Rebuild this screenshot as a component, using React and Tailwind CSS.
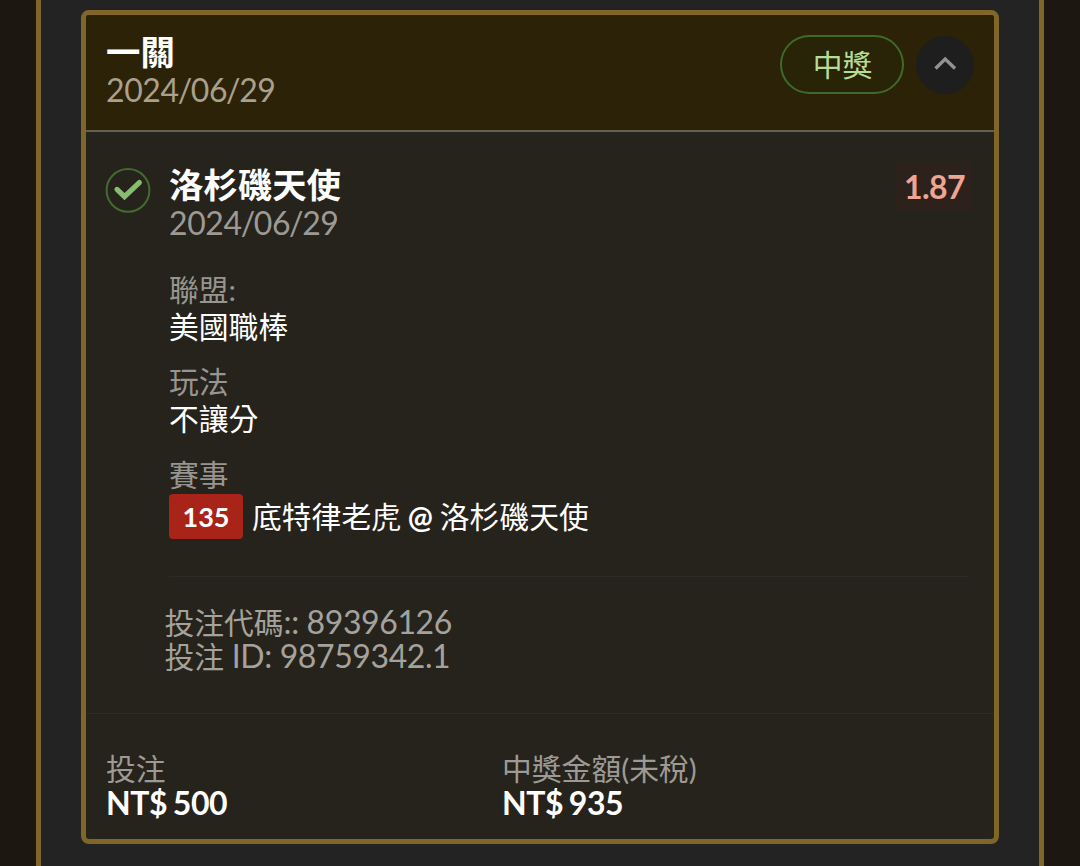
import clsx from 'clsx';

const details = [
    { label: '聯盟:', value: '美國職棒' },
    { label: '玩法', value: '不讓分' },
];

function Num({ className, children }) {
    return <span className={clsx('text-[32px] tracking-[-0.4px]', className)}>{children}</span>;
}

function DateText({ value }) {
    return (
        <Num>
            {value.split('/').map((part, i) => (
                <span key={i}>
                    {i > 0 && <span className="mx-[-1px]">/</span>}
                    {part}
                </span>
            ))}
        </Num>
    );
}

function StatusIcon() {
    return (
        <svg className="mt-[1px] h-[46px] w-[46px] shrink-0" viewBox="0 0 46 46" fill="none">
            <circle cx="23" cy="23.3" r="21.4" stroke="#426b2f" strokeWidth="2" />
            <path d="M12 22.4L19.5 29.6L34.3 15.6" stroke="#86bd71" strokeWidth="5.2" strokeLinecap="round" />
        </svg>
    );
}

function CardHeader() {
    return (
        <header className="flex h-[117px] justify-between border-b-2 border-[#665f50] bg-[#2c2207] pl-5 pr-5 pt-[20px]">
            <div>
                <h2 className="-mt-[1px] h-[37px] text-[34.4px] leading-[36px] font-bold text-white">一關</h2>
                <div className="h-[38px] leading-[38px] text-[#a9a08d]">
                    <DateText value="2024/06/29" />
                </div>
            </div>
            <div className="flex gap-3">
                <div className="flex h-[59px] w-[124px] items-center justify-center rounded-full border-2 border-[#3f6a29] bg-[#292307] pt-[1px] pl-[1px] text-[#b5dd98]">
                    中獎
                </div>
                <button className="mt-[1px] flex h-[58px] w-[58px] items-center justify-center rounded-full bg-[#1e1e1f]">
                    <svg className="-mt-[5px] h-[14px] w-[22px]" viewBox="0 0 22 14" fill="none">
                        <path d="M1.5 12.5L11.2 3L21 12.5" stroke="#929292" strokeWidth="3.4" />
                    </svg>
                </button>
            </div>
        </header>
    );
}

function Selection() {
    return (
        <section className="h-[582px] border-b border-[#2c2b25] pl-[19px] pr-[22px] pt-[34px]">
            <div className="flex">
                <StatusIcon />
                <div className="ml-[18px] flex-1">
                    <div className="flex justify-between">
                        <div>
                            <h3 className="h-[38px] text-[34.4px] leading-[37px] font-bold text-white">洛杉磯天使</h3>
                            <div className="h-[38px] leading-[38px] text-[#9d9a96]">
                                <DateText value="2024/06/29" />
                            </div>
                        </div>
                        <div className="-mt-[5px] h-[50px] w-[77px] rounded bg-[#2d211b] pl-[9px] leading-[51px] font-bold text-[#eda596]">
                            <Num className="tracking-[-0.6px]">1.87</Num>
                        </div>
                    </div>
                    <dl className="mt-[29px]">
                        {details.map(({ label, value }) => (
                            <div key={label} className="mb-[18.3px]">
                                <dt className="h-[37px] leading-[37px] text-[#989590]">{label}</dt>
                                <dd className="h-[37px] leading-[37px] text-white">{value}</dd>
                            </div>
                        ))}
                        <dt className="h-[37px] leading-[37px] text-[#989590]">賽事</dt>
                        <dd className="mt-[1.4px] flex h-[45px] items-center text-white">
                            <span className="mr-[9px] h-[45px] w-[74px] rounded bg-[#a82318] text-center text-[27px] leading-[46px] font-bold">
                                135
                            </span>
                            <span className="mt-[2px] whitespace-nowrap [word-spacing:-0.8px]">
                                底特律老虎 <b>@</b> 洛杉磯天使
                            </span>
                        </dd>
                    </dl>
                    <hr className="mt-[37px] mr-[3px] border-[#2b2a24]" />
                    <div className="-ml-[4.6px] mt-[28px] text-[#a5a29d]">
                        <div className="h-[34px] leading-[34px]">
                            投注代碼<Num>:: 89396126</Num>
                        </div>
                        <div className="h-[34px] leading-[34px]">
                            投注<Num> ID: 98759342.1</Num>
                        </div>
                    </div>
                </div>
            </div>
        </section>
    );
}

function Amount({ label, value }) {
    return (
        <div>
            <div className="h-[34px] leading-[34px] text-[#9d9a95]">{label}</div>
            <div className="h-[34px] leading-[34px] font-bold text-white">
                <Num className="[word-spacing:-1.8px]">{value}</Num>
            </div>
        </div>
    );
}

export default function App() {
    return (
        <div className="h-[866px] overflow-hidden bg-[#1c1811] px-[36px] font-['Lato','Noto_Sans_CJK_TC',sans-serif] text-[29.8px]">
            <main className="h-[866px] w-[1008px] border-x-[5px] border-[#806729] bg-[#232323] pl-[40px] pt-[10px]">
                <article className="h-[834px] w-[918px] overflow-hidden rounded-lg border-[5px] border-[#806729] bg-[#26231c]">
                    <CardHeader />
                    <Selection />
                    <footer className="grid grid-cols-[396px_1fr] pl-[20px] pt-[38px]">
                        <Amount label="投注" value="NT$ 500" />
                        <Amount label="中獎金額(未稅)" value="NT$ 935" />
                    </footer>
                </article>
            </main>
        </div>
    );
}
